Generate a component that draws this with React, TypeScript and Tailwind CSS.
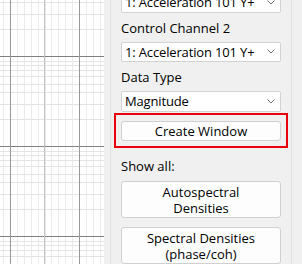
import React from 'react';

// Log grid of the plot behind the settings panel
const Chart: React.FC = () => {
    const majorsY = [-33.5, 56.5, 146.5, 236.5];
    const minorsY: number[] = [];
    majorsY.forEach((top) => {
        for (let k = 2; k <= 9; k++) {
            minorsY.push(Math.round(top + 90 - Math.log10(k) * 90) + 0.5);
        }
    });
    const minorsX: number[] = [];
    for (let i = -1; i < 15; i++) {
        minorsX.push(Math.round(10 + i * 6.9) + 0.5);
    }

    return (
        <svg width="104" height="264" className="block shrink-0 bg-white">
            {minorsX.map((x) => (
                <line key={`vx${x}`} x1={x} y1={0} x2={x} y2={264} stroke="#ebebeb" strokeWidth={1} />
            ))}
            {minorsY.map((y, i) => (
                <line key={`hy${i}`} x1={0} y1={y} x2={104} y2={y} stroke="#e4e4e4" strokeWidth={1} />
            ))}
            {majorsY.map((y) => (
                <line key={`my${y}`} x1={0} y1={y} x2={104} y2={y} stroke="#808080" strokeWidth={1} />
            ))}
            <line x1={10.5} y1={0} x2={10.5} y2={264} stroke="#999999" strokeWidth={1} />
            <line x1={44.5} y1={0} x2={44.5} y2={264} stroke="#c2c2c2" strokeWidth={1} />
            <line x1={79.5} y1={0} x2={79.5} y2={264} stroke="#999999" strokeWidth={1} />
        </svg>
    );
};

// Выпадающий список
const Select: React.FC<{ value: string; className?: string }> = ({ value, className = '' }) => (
    <div
        className={`flex items-center justify-between h-[21px] bg-white border border-[#d2d2d2] rounded-[2px] pl-[3px] pr-[5px] ${className}`}
    >
        <span className="leading-[16px] tracking-[-0.15px]">{value}</span>
        <svg width="8" height="5" viewBox="0 0 8 5" className="shrink-0">
            <path d="M0.5 0.5 L4 4 L7.5 0.5" fill="none" stroke="#707070" strokeWidth={1} />
        </svg>
    </div>
);

const Label: React.FC<{ text: string; className?: string }> = ({ text, className = '' }) => (
    <div className={`leading-[16px] ${className}`}>{text}</div>
);

const TwoLineButton: React.FC<{ lines: [string, string]; className?: string }> = ({ lines, className = '' }) => (
    <button
        className={`flex flex-col items-center justify-center w-full h-[37px] shrink-0 bg-[#fdfdfd] border border-[#d0d0d0] rounded-[3px] ${className}`}
    >
        <span className="block leading-[16px]">{lines[0]}</span>
        <span className="block leading-[16px]">{lines[1]}</span>
    </button>
);

export default function App() {
    return (
        <div
            className="flex w-[302px] h-[264px] overflow-hidden bg-[#f0f0f0] text-[13px] text-black"
            style={{ fontFamily: '"Segoe UI", "Open Sans", sans-serif' }}
        >
            <Chart />
            <div className="w-[6px] shrink-0" />

            {/* Панель настроек */}
            <div className="flex flex-col w-[182px] shrink-0 border-x border-[#e2e2e2] px-[10px]">
                <Select value="1: Acceleration 101 Y+" className="-mt-[8px]" />
                <Label text="Control Channel 2" className="mt-[7px]" />
                <Select value="1: Acceleration 101 Y+" className="mt-[6px]" />
                <Label text="Data Type" className="mt-[7px]" />
                <Select value="Magnitude" className="mt-[6px]" />

                <div className="relative mt-[9px]">
                    <button className="w-full h-[20px] bg-[#fdfdfd] border border-[#d0d0d0] rounded-[3px] leading-[16px]">
                        Create Window
                    </button>
                    {/* Красная рамка выделения */}
                    <div className="absolute -left-[7px] -right-[7px] -top-[8px] -bottom-[7px] border-2 border-[#e8000b] pointer-events-none" />
                </div>

                <Label text="Show all:" className="mt-[17px]" />
                <TwoLineButton lines={['Autospectral', 'Densities']} className="mt-[7px]" />
                <TwoLineButton lines={['Spectral Densities', '(phase/coh)']} className="mt-[9px]" />
            </div>
        </div>
    );
}
